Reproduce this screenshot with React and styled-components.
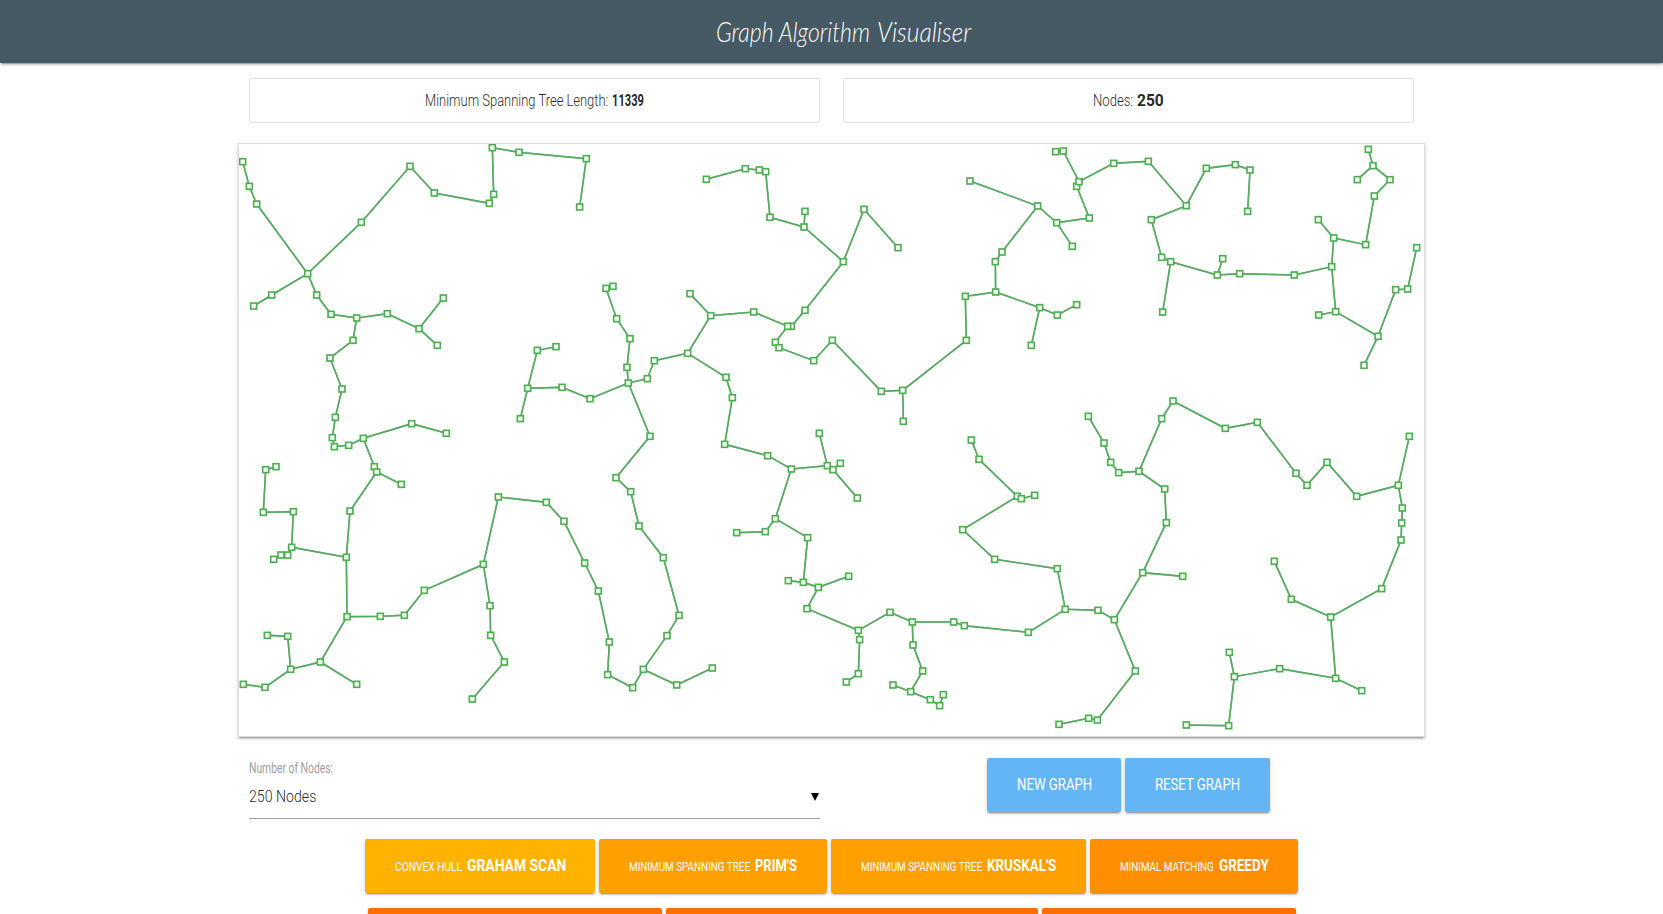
import React, { useLayoutEffect, useRef, useState } from "react";
import styled, { createGlobalStyle } from "styled-components";

const GlobalStyle = createGlobalStyle`
  *, *::before, *::after { box-sizing: border-box; }
  html, body { margin: 0; height: 100%; overflow: hidden; background: #fff; }
  body { font-family: Roboto, "Liberation Sans", sans-serif; color: rgba(0, 0, 0, 0.87); }
`;

const shadow = `0 2px 2px 0 rgba(0, 0, 0, 0.14), 0 1px 5px 0 rgba(0, 0, 0, 0.12),
  0 3px 1px -2px rgba(0, 0, 0, 0.2)`;

/* Text squeezed horizontally to a given advance width */
const Slot = styled.span`
  display: inline-block;
  width: ${(p) => p.$width}px;
  white-space: nowrap;
  font-size: ${(p) => p.$size || 16.7}px;
  font-weight: ${(p) => (p.$bold ? 700 : p.$weight || 350)};
`;
const Glyphs = styled.span`
  display: inline-block;
  transform-origin: 0 50%;
`;

function Condensed({ width, size, bold, weight, children }) {
  const ref = useRef(null);
  const [scale, setScale] = useState(1);
  useLayoutEffect(() => {
    const natural = ref.current.offsetWidth;
    if (natural) setScale(width / natural);
  }, [width, children]);
  return (
    <Slot $width={width} $size={size} $bold={bold} $weight={weight}>
      <Glyphs ref={ref} style={{ transform: `scaleX(${scale})` }}>
        {children}
      </Glyphs>
    </Slot>
  );
}

const Page = styled.div`
  height: 914px;
  overflow: hidden;
`;

const NavBar = styled.header`
  height: 63px;
  background: #455a64;
  color: #fff;
  box-shadow: ${shadow};
  display: flex;
  justify-content: center;
  align-items: center;
  gap: 7px;
  padding: 0 0 2px 24px;
  font-family: Lato, sans-serif;
  font-style: italic;
`;

const Content = styled.main`
  width: 1187px;
  margin: 0 auto;
  padding-top: 15px;
`;

const Columns = styled.div`
  display: grid;
  grid-template-columns: 571px 571px;
  gap: 23px;
  padding: 0 11px;
`;

const StatCard = styled.div`
  height: 45px;
  border: 1px solid #e0e0e0;
  border-radius: 2px;
  display: flex;
  justify-content: center;
  align-items: center;
  gap: 4.5px;
`;

const CanvasFrame = styled.section`
  margin-top: 20px;
  height: 594px;
  border: 1px solid #dcdcdc;
  box-shadow: ${shadow};
  svg { display: block; width: 1185px; height: 592px; }
`;

const Controls = styled(Columns)`
  margin-top: 21px;
`;

const SelectField = styled.div`
  padding-top: 2px;
  height: 61px;
  border-bottom: 1px solid #9e9e9e;
`;
const FieldLabel = styled.div`
  color: #9e9e9e;
  line-height: 15px;
`;
const SelectValue = styled.div`
  display: flex;
  justify-content: space-between;
  align-items: center;
  height: 26px;
  margin-top: 7px;
  padding-right: 1px;
`;
const Caret = styled.span`
  width: 0;
  height: 0;
  margin-top: 1px;
  border: 4px solid transparent;
  border-top: 8px solid #000;
  border-bottom: 0;
`;

const ButtonRow = styled.div`
  display: flex;
  justify-content: center;
  gap: 4px;
  margin-top: ${(p) => p.$top || 0}px;
`;

const Button = styled.button`
  width: ${(p) => p.$width}px;
  height: 54px;
  flex: none;
  padding: 0;
  border: 0;
  border-radius: 2px;
  background: ${(p) => p.$color};
  color: #fff;
  font-family: inherit;
  box-shadow: ${shadow};
  display: flex;
  justify-content: center;
  align-items: baseline;
  gap: 5px;
  line-height: 53px;
`;

/* Tree branches: each line is a chain of node positions, in thirds of a pixel */
const BRANCHES = `
20,65 40,139 62,192 215,401
53,498 107,465 215,401 376,247 522,79 595,159 760,190 773,163 769,23 849,37 1051,56 1031,201
215,401 242,465 285,523 362,534 454,521 549,566 622,474
549,566 604,616
362,534 351,601 282,654 318,747 298,832 289,893 295,920 338,916 382,895 527,851 631,880
382,895 415,980 422,996 496,1033
422,996 342,1113 331,1252 333,1430
331,1252 167,1222 172,1115 82,1117 89,989 120,980
167,1222 155,1245 135,1245 113,1258
1131,439 1110,445 1142,536 1182,596 1173,682 1177,729
960,620 904,631 875,745 853,836
875,745 978,742 1062,776 1177,729 1234,716 1255,662 1355,640
1177,729 1242,889 1140,1013 1184,1055 1209,1158 1282,1253 1329,1426 1293,1487 1222,1588 1322,1635 1429,1584
1222,1588 1190,1643 1115,1604 1120,1506 1087,1353 1046,1269 984,1144 931,1087 787,1071 742,1273 565,1351 505,1426 433,1429 333,1430 253,1566 164,1588 87,1642 22,1633
164,1588 155,1489 94,1486
253,1566 362,1633
742,1273 762,1397 764,1486 805,1566 709,1677
1411,118 1528,86 1570,90 1589,95 1602,232 1704,261 1707,214
1704,261 1822,365 1884,208 1986,323
1822,365 1707,511 1666,559 1655,559
1655,559 1618,607 1629,623 1733,662 1789,601 1936,754 2000,751 2002,844
2000,751 2191,601 2188,469 2279,456 2278,365 2298,336 2405,198 2202,123
1655,559 1553,516 1424,527 1362,461
1424,527 1355,640 1470,712 1489,773 1466,913 1595,947 1666,987 1774,977 1750,880
1774,977 1791,989 1864,1074
1791,989 1813,970
1666,987 1618,1136 1588,1175 1502,1178
1618,1136 1715,1193 1702,1327 1657,1322
1702,1327 1747,1342 1838,1309
1747,1342 1713,1406 1867,1471 1962,1417 2029,1446 2153,1446 2185,1457 2377,1477 2488,1408
1867,1471 1871,1499 1867,1601 1831,1626
2029,1446 2031,1515 2060,1593 2024,1655 1971,1635
2024,1655 2083,1679 2111,1697 2122,1664
2206,900 2229,958 2344,1069 2356,1076 2396,1066
2344,1069 2180,1169 2276,1258 2464,1286 2488,1408 2586,1411 2635,1439 2720,1298 2840,1309
2720,1298 2791,1148 2786,1047 2709,994 2648,998 2624,967 2604,909 2557,829
2635,1439 2698,1593 2584,1740 2558,1735 2469,1753
2709,994 2777,836 2811,783 2968,865 3064,847 3180,1000 3213,1036 3273,967 3362,1069 3487,1036 3520,889
3487,1036 3499,1104 3497,1149 3495,1200 3437,1346 3284,1431 3166,1378 3115,1264
3284,1431 3299,1615 3377,1652
3299,1615 3131,1586 2995,1610 2980,1537
2995,1610 2978,1757 2851,1755
2405,198 2462,248 2509,319
2462,248 2560,234 2522,139 2529,125 2482,33 2459,35
2529,125 2633,70 2737,64 2851,197 2911,85 2998,74 3042,90 3035,214
2851,197 2746,239 2777,352 2804,365 2780,516
2804,365 2944,405 2960,356
2944,405 3011,401 3175,405 3287,380 3293,294 3247,239
3293,294 3389,314 3415,168 3462,119 3411,77 3397,28
3411,77 3364,119
3287,380 3299,515 3248,525
3299,515 3426,589 3384,676
3426,589 3479,449 3515,447 3542,323
2279,456 2411,503 2464,525 2522,494
2411,503 2386,616
`
  .trim()
  .split("\n");

const NODES = [...new Set(BRANCHES.flatMap((b) => b.split(" ")))].map((n) =>
  n.split(",").map(Number)
);

function Graph() {
  return (
    <svg viewBox="9 12 3555 1776">
      <g fill="none" stroke="#607d8b" strokeOpacity="0.8" strokeWidth="4.6">
        {BRANCHES.map((b) => <polyline key={b} points={b} />)}
      </g>
      <g fill="none" stroke="#4caf50" strokeOpacity="0.85" strokeWidth="4.8">
        {BRANCHES.map((b) => <polyline key={b} points={b} />)}
      </g>
      <g fill="#fff" stroke="#4caf50" strokeWidth="5">
        {NODES.map(([x, y]) => (
          <rect key={`${x},${y}`} x={x - 8.9} y={y - 8.9} width="17.8" height="17.8" />
        ))}
      </g>
    </svg>
  );
}

const ALGORITHMS = [
  { width: 230, color: "#ffb300", kind: "CONVEX HULL", kindWidth: 67, name: "GRAHAM SCAN", nameWidth: 99 },
  { width: 228, color: "#ffa000", kind: "MINIMUM SPANNING TREE", kindWidth: 121, name: "PRIM'S", nameWidth: 42 },
  { width: 255, color: "#ffa000", kind: "MINIMUM SPANNING TREE", kindWidth: 121, name: "KRUSKAL'S", nameWidth: 69 },
  { width: 208, color: "#ff8f00", kind: "MINIMAL MATCHING", kindWidth: 94, name: "GREEDY", nameWidth: 50 },
];

export default function App() {
  return (
    <Page>
      <GlobalStyle />
      <NavBar>
        <Condensed width={154} size={28} weight={300}>Graph Algorithm</Condensed>
        <Condensed width={94} size={28} weight={300}>Visualiser</Condensed>
      </NavBar>
      <Content>
        <Columns>
          <StatCard>
            <Condensed width={183}>Minimum Spanning Tree Length:</Condensed>
            <Condensed width={32} bold>11339</Condensed>
          </StatCard>
          <StatCard>
            <Condensed width={40}>Nodes:</Condensed>
            <Condensed width={27} bold>250</Condensed>
          </StatCard>
        </Columns>
        <CanvasFrame>
          <Graph />
        </CanvasFrame>
        <Controls>
          <SelectField>
            <FieldLabel>
              <Condensed width={84} size={13.8} weight={400}>Number of Nodes:</Condensed>
            </FieldLabel>
            <SelectValue>
              <Condensed width={67}>250 Nodes</Condensed>
              <Caret />
            </SelectValue>
          </SelectField>
          <ButtonRow>
            <Button $width={134} $color="#64b5f6">
              <Condensed width={75} weight={400}>NEW GRAPH</Condensed>
            </Button>
            <Button $width={145} $color="#64b5f6">
              <Condensed width={85} weight={400}>RESET GRAPH</Condensed>
            </Button>
          </ButtonRow>
        </Controls>
        <ButtonRow $top={20}>
          {ALGORITHMS.map((a) => (
            <Button key={a.name} $width={a.width} $color={a.color}>
              <Condensed width={a.kindWidth} size={13.4} weight={400}>{a.kind}</Condensed>
              <Condensed width={a.nameWidth} bold>{a.name}</Condensed>
            </Button>
          ))}
        </ButtonRow>
        <ButtonRow $top={15}>
          <Button $width={294} $color="#ff6f00" />
          <Button $width={372} $color="#ff6f00" />
          <Button $width={254} $color="#ff6f00" />
        </ButtonRow>
      </Content>
    </Page>
  );
}
